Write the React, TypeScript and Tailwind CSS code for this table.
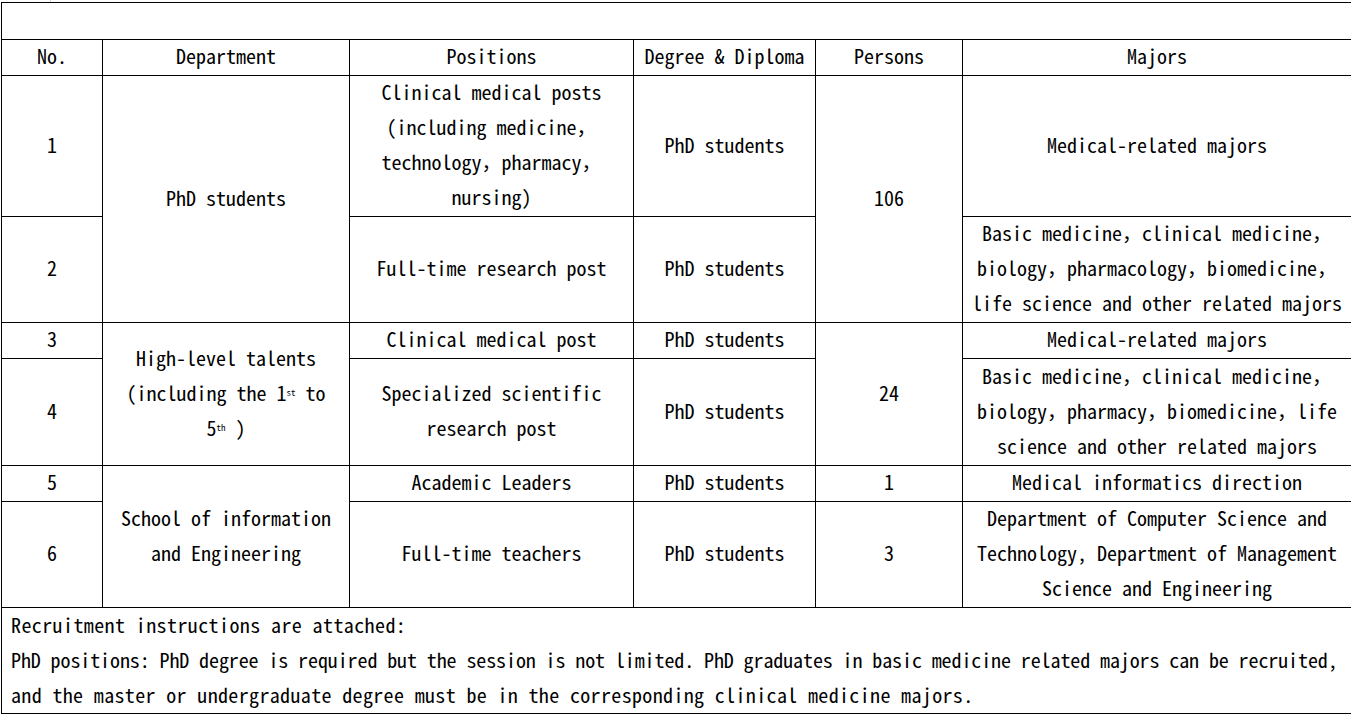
import React from "react";

function Cell({
  children,
  rowSpan,
  colSpan,
}: {
  children?: React.ReactNode;
  rowSpan?: number;
  colSpan?: number;
}) {
  return (
    <td rowSpan={rowSpan} colSpan={colSpan} className="border border-black p-0 text-center align-middle">
      <div className="relative -top-[2px]">{children}</div>
    </td>
  );
}

export default function App() {
  return (
    <div
      className="relative h-[714px] w-[1351px] overflow-hidden bg-white text-[20px] leading-[35px] text-black"
      style={{ fontFamily: '"Noto Sans Mono CJK SC", "Liberation Mono", monospace' }}
    >
      <div className="absolute left-[50px] top-0 h-[2px] w-px bg-gray-300" />
      <table className="ml-px mt-[2px] w-[1350px] table-fixed border-collapse">
        <colgroup>
          <col className="w-[101px]" />
          <col className="w-[247px]" />
          <col className="w-[284px]" />
          <col className="w-[182px]" />
          <col className="w-[147px]" />
          <col className="w-[389px]" />
        </colgroup>
        <tbody>
          <tr className="h-[37px]">
            <Cell colSpan={6}></Cell>
          </tr>
          <tr className="h-[36px]">
            <Cell>No.</Cell>
            <Cell>Department</Cell>
            <Cell>Positions</Cell>
            <Cell>Degree &amp; Diploma</Cell>
            <Cell>Persons</Cell>
            <Cell>Majors</Cell>
          </tr>
          <tr className="h-[141px]">
            <Cell>1</Cell>
            <Cell rowSpan={2}>PhD students</Cell>
            <Cell>
              Clinical medical posts
              <br />
              (including medicine，
              <br />
              technology，pharmacy，
              <br />
              nursing)
            </Cell>
            <Cell>PhD students</Cell>
            <Cell rowSpan={2}>106</Cell>
            <Cell>Medical-related majors</Cell>
          </tr>
          <tr className="h-[106px]">
            <Cell>2</Cell>
            <Cell>Full-time research post</Cell>
            <Cell>PhD students</Cell>
            <Cell>
              Basic medicine，clinical medicine，
              <br />
              biology，pharmacology，biomedicine，
              <br />
              life science and other related majors
            </Cell>
          </tr>
          <tr className="h-[36px]">
            <Cell>3</Cell>
            <Cell rowSpan={2}>
              High-level talents
              <br />
              (including the 1<sup className="text-[9px]">st</sup> to
              <br />
              5<sup className="text-[9px]">th</sup> )
            </Cell>
            <Cell>Clinical medical post</Cell>
            <Cell>PhD students</Cell>
            <Cell rowSpan={2}>24</Cell>
            <Cell>Medical-related majors</Cell>
          </tr>
          <tr className="h-[107px]">
            <Cell>4</Cell>
            <Cell>
              Specialized scientific
              <br />
              research post
            </Cell>
            <Cell>PhD students</Cell>
            <Cell>
              Basic medicine，clinical medicine，
              <br />
              biology，pharmacy，biomedicine，life
              <br />
              science and other related majors
            </Cell>
          </tr>
          <tr className="h-[36px]">
            <Cell>5</Cell>
            <Cell rowSpan={2}>
              School of information
              <br />
              and Engineering
            </Cell>
            <Cell>Academic Leaders</Cell>
            <Cell>PhD students</Cell>
            <Cell>1</Cell>
            <Cell>Medical informatics direction</Cell>
          </tr>
          <tr className="h-[106px]">
            <Cell>6</Cell>
            <Cell>Full-time teachers</Cell>
            <Cell>PhD students</Cell>
            <Cell>3</Cell>
            <Cell>
              Department of Computer Science and
              <br />
              Technology, Department of Management
              <br />
              Science and Engineering
            </Cell>
          </tr>
          <tr className="h-[106px]">
            <td colSpan={6} className="border border-black px-[9px] py-0 text-left align-middle whitespace-nowrap">
              <div className="relative -top-px">
                <span className="tracking-[0.4px]">Recruitment instructions are attached:</span>
                <br />
                <span className="tracking-[-0.1px]">
                  PhD positions: PhD degree is required but the session is not limited. PhD graduates in basic medicine related majors can be recruited,
                </span>
                <br />
                <span className="tracking-[0.35px]">
                  and the master or undergraduate degree must be in the corresponding clinical medicine majors.
                </span>
              </div>
            </td>
          </tr>
        </tbody>
      </table>
    </div>
  );
}
